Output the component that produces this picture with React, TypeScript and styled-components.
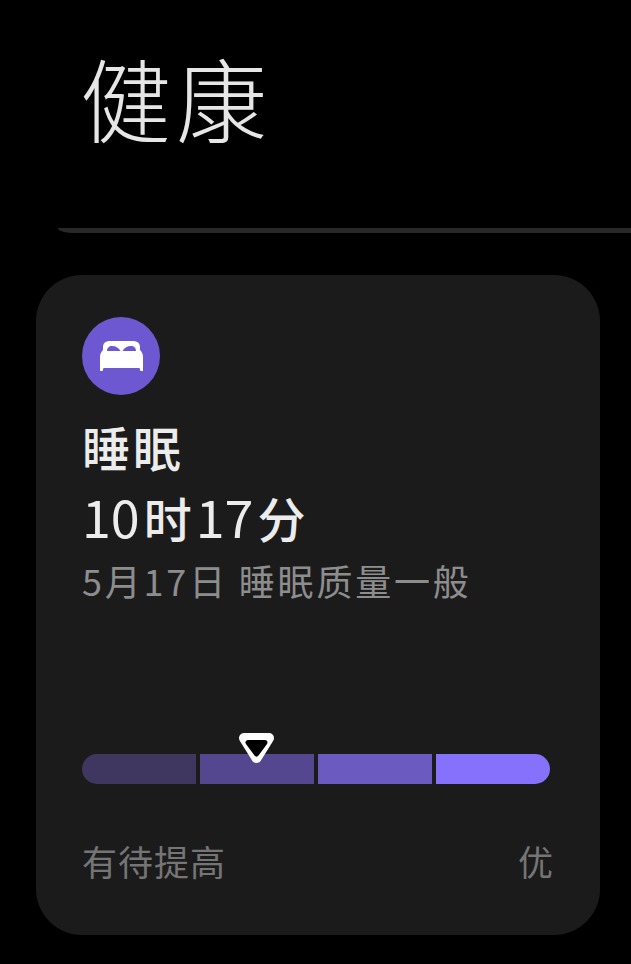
import styled, { createGlobalStyle } from 'styled-components'

const GlobalStyle = createGlobalStyle`
  html, body {
    margin: 0;
    background: #000;
  }
`

const Page = styled.div`
  width: 631px;
  height: 964px;
  overflow: hidden;
  background: #000;
  font-family: "Noto Sans CJK SC", "Noto Sans", sans-serif;
  display: flex;
  flex-direction: column;
`

const Title = styled.h1`
  margin: 0;
  height: 228px;
  padding: 38px 0 0 80px;
  box-sizing: border-box;
  font-size: 91px;
  line-height: 116px;
  letter-spacing: 5px;
  font-weight: 300;
  color: #e6e6e6;
`

const Divider = styled.div`
  height: 5px;
  margin-left: 58px;
  border-radius: 14px 0 0 14px / 0 0 5px 5px;
  background: #282828;
`

const Card = styled.section`
  width: 564px;
  height: 660px;
  margin: 42px 0 0 36px;
  padding: 42px 50px 0 46px;
  box-sizing: border-box;
  border-radius: 46px;
  background: #1b1b1c;
  display: flex;
  flex-direction: column;
`

const IconBadge = styled.div`
  width: 78px;
  height: 78px;
  border-radius: 50%;
  background: #6e58d2;
  display: flex;
  align-items: center;
  justify-content: center;
`

const Name = styled.div`
  margin-top: 19px;
  font-size: 48px;
  line-height: 64px;
  letter-spacing: 3px;
  font-weight: 500;
  color: #ececec;
`

const Duration = styled.div`
  margin-top: 5px;
  font-size: 52px;
  line-height: 66px;
  font-weight: 400;
  color: #ececec;
  display: flex;
  align-items: baseline;
`

const Unit = styled.span`
  font-size: 48px;
  font-weight: 500;
  margin: 0 4px;
`

const Detail = styled.div`
  margin-top: 5px;
  font-size: 36px;
  line-height: 50px;
  letter-spacing: 2.8px;
  font-weight: 400;
  color: #8d8d8d;
  white-space: nowrap;
`

const Scale = styled.div`
  position: relative;
  margin-top: 149px;
  height: 30px;
  display: flex;
  gap: 4px;
`

const Segment = styled.div<{ $color: string }>`
  flex: 1;
  background: ${p => p.$color};
  &:first-of-type {
    border-radius: 15px 0 0 15px;
  }
  &:last-of-type {
    border-radius: 0 15px 15px 0;
  }
`

const Marker = styled.svg`
  position: absolute;
  left: 156px;
  top: -21px;
`

const Labels = styled.div`
  margin-top: 52px;
  margin-right: -3px;
  display: flex;
  justify-content: space-between;
  font-size: 35px;
  line-height: 50px;
  color: #757575;
`

const LowLabel = styled.span`
  letter-spacing: 1px;
`

const segments = ['#3f3760', '#54468f', '#6b5bc0', '#8571fb']

export default function App() {
  return (
    <Page>
      <GlobalStyle />
      <Title>健康</Title>
      <Divider />
      <Card>
        <IconBadge>
          <svg width="43" height="30" viewBox="0 0 43 30">
            <path
              fill="#fff"
              d="M3 9V6C3 2 6 0 10 0H33C37 0 40 2 40 6V9C42 11 43 13 43 16V30H40.500L39.500 27H3.500L2.500 30H0V16C0 13 1 11 3 9Z"
            />
            <path
              fill="#6e58d2"
              d="M7 10C7 7 9 5 12 5C16 5 19 7 20.500 10ZM22.500 10C24 7 27 5 31 5C34 5 36 7 36 10Z"
            />
          </svg>
        </IconBadge>
        <Name>睡眠</Name>
        <Duration>
          10<Unit>时</Unit>17<Unit>分</Unit>
        </Duration>
        <Detail>5月17日 睡眠质量一般</Detail>
        <Scale>
          {segments.map(color => (
            <Segment key={color} $color={color} />
          ))}
          <Marker width="38" height="30" viewBox="0 0 38 30">
            <path
              d="M6 5H31L18.500 25Z"
              fill="#fff"
              stroke="#fff"
              strokeWidth="10"
              strokeLinejoin="round"
            />
            <path
              d="M10 9.500H27L18.500 21Z"
              fill="#000"
              stroke="#000"
              strokeWidth="5"
              strokeLinejoin="round"
            />
          </Marker>
        </Scale>
        <Labels>
          <LowLabel>有待提高</LowLabel>
          <span>优</span>
        </Labels>
      </Card>
    </Page>
  )
}
